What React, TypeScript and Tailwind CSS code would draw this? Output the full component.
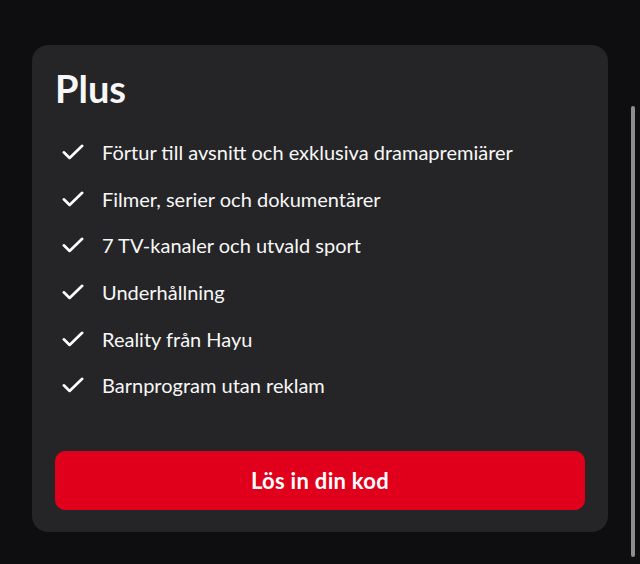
import React from 'react';

const features = [
  'Förtur till avsnitt och exklusiva dramapremiärer',
  'Filmer, serier och dokumentärer',
  '7 TV-kanaler och utvald sport',
  'Underhållning',
  'Reality från Hayu',
  'Barnprogram utan reklam',
];

function Check() {
  return (
    <svg width="22" height="16" viewBox="0 0 22 16" fill="none" className="shrink-0">
      <path
        d="M1.8 8.3 L7.6 14 L20.2 1.8"
        stroke="#ffffff"
        strokeWidth="2.6"
        strokeLinecap="round"
        strokeLinejoin="round"
      />
    </svg>
  );
}

export default function App() {
  return (
    <div
      className="relative w-[640px] h-[564px] overflow-hidden bg-[#0e0e10] pl-8 pt-[45px]"
      style={{ fontFamily: 'Lato, "Noto Sans", sans-serif' }}
    >
      <div className="w-[576px] rounded-[16px] bg-[#252527] px-[23px] pt-6 pb-[22px] text-[#f7f7f7]">
        <h1 className="text-[38px] leading-[38px] font-bold">Plus</h1>
        <ul className="mt-[22px]">
          {features.map((f) => (
            <li key={f} className="flex h-[46.6px] items-center">
              <div className="w-[47px] pl-[7px]">
                <Check />
              </div>
              <span className="text-[20px] leading-none">{f}</span>
            </li>
          ))}
        </ul>
        <button className="mt-[42px] flex h-[59px] w-full items-center justify-center rounded-[10px] bg-[#e1001b] text-[22px] font-bold tracking-[0.3px] text-white">
          Lös in din kod
        </button>
      </div>
      <div className="absolute left-[631px] top-[106px] h-[451px] w-[4px] rounded-full bg-[#8d8d8f]" />
    </div>
  );
}
